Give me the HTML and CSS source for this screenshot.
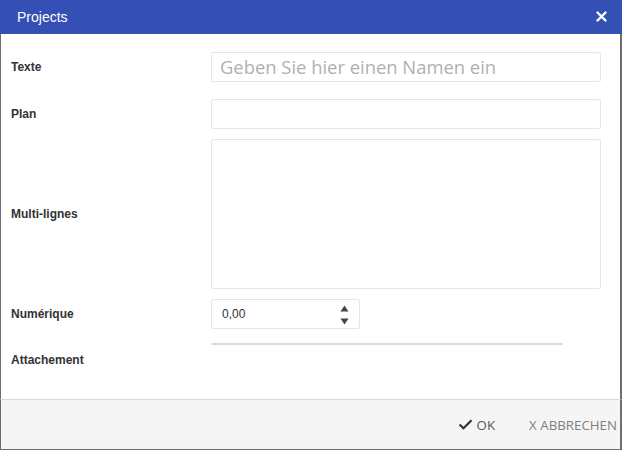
FILE: index.html
```html
<!DOCTYPE html>
<html>
<head>
<meta charset="utf-8">
<link rel="stylesheet" href="styles.css">
</head>
<body>
<div class="dialog">
  <div class="header">
    <span class="title">Projects</span>
    <span class="close">
      <svg width="11" height="11" viewBox="0 0 11 11"><path d="M1.5 1.5 L9.5 9.5 M9.5 1.5 L1.5 9.5" stroke="#fff" stroke-width="2.4" stroke-linecap="round"/></svg>
    </span>
  </div>
  <div class="content">
    <div class="row row-text">
      <label class="label">Texte</label>
      <div class="input placeholder">Geben Sie hier einen Namen ein</div>
    </div>
    <div class="row row-plan">
      <label class="label">Plan</label>
      <div class="input"></div>
    </div>
    <div class="row row-multi">
      <label class="label">Multi-lignes</label>
      <div class="input textarea"></div>
    </div>
    <div class="row row-num">
      <label class="label">Numérique</label>
      <div class="input number">
        <span class="num-value">0,00</span>
        <span class="spinner">
          <svg width="9" height="7" viewBox="0 0 9 7"><path d="M4.5 0.5 L8.5 6.5 L0.5 6.5 Z" fill="#444"/></svg>
          <svg width="9" height="7" viewBox="0 0 9 7"><path d="M0.5 0.5 L8.5 0.5 L4.5 6.5 Z" fill="#444"/></svg>
        </span>
      </div>
    </div>
    <div class="row row-attach">
      <label class="label">Attachement</label>
      <div class="attach-line"></div>
    </div>
  </div>
  <div class="footer">
    <span class="btn btn-ok">
      <svg width="15" height="11" viewBox="0 0 15 11"><path d="M1.5 5.5 L5.5 9.3 L13.5 1.3" fill="none" stroke="#333" stroke-width="2.2"/></svg>
      OK
    </span>
    <span class="btn btn-cancel">X ABBRECHEN</span>
  </div>
</div>
</body>
</html>
```

FILE: styles.css
```css
html, body {
  margin: 0;
  padding: 0;
  background: #fff;
}

.dialog {
  width: 622px;
  height: 450px;
  display: flex;
  flex-direction: column;
  font-family: "Liberation Sans", Arial, sans-serif;
  box-sizing: border-box;
}

.header {
  height: 34px;
  flex: none;
  background: #3450b5;
  color: #fff;
  display: flex;
  align-items: center;
  justify-content: space-between;
  padding: 0 15px 0 17px;
}

.title {
  font-size: 14px;
  margin-top: -1px;
}

.close {
  display: flex;
  margin-top: -2px;
}

.content {
  flex: 1;
  border-left: 1px solid #6e6e6e;
  border-right: 2px solid #6e6e6e;
  padding: 18px 0 0 10px;
  display: flex;
  flex-direction: column;
}

.row {
  display: grid;
  grid-template-columns: 200px 390px;
  align-items: center;
}

.row-text { margin-bottom: 17px; }
.row-plan { margin-bottom: 10px; }
.row-multi { margin-bottom: 10px; }
.row-num { margin-bottom: 14px; }

.label {
  font-size: 12px;
  font-weight: bold;
  color: #333;
}

.input {
  height: 30px;
  box-sizing: border-box;
  border: 1px solid #e6e6e6;
  border-radius: 2px;
  background: #fff;
}

.placeholder {
  font-family: "Open Sans", sans-serif;
  font-size: 18.4px;
  color: #b0b0b0;
  padding-left: 8px;
  line-height: 28px;
}

.textarea {
  height: 150px;
}

.number {
  width: 149px;
  display: flex;
  align-items: center;
  justify-content: space-between;
  padding: 0 10px 0 10px;
}

.num-value {
  font-size: 12px;
  color: #333;
}

.spinner {
  display: flex;
  flex-direction: column;
  gap: 6px;
  margin-top: 1px;
}

.spinner svg {
  display: block;
}

.row-attach {
  align-items: start;
  height: 34px;
}

.row-attach .label {
  align-self: center;
}

.attach-line {
  width: 352px;
  height: 2px;
  background: #dcdcdc;
  border-radius: 1px;
}

.footer {
  height: 51px;
  flex: none;
  box-sizing: border-box;
  border-top: 1px solid #dadada;
  border-left: 1px solid #6e6e6e;
  border-right: 2px solid #6e6e6e;
  border-bottom: 1px solid #6e6e6e;
  background: #f5f5f5;
  display: flex;
  align-items: center;
  justify-content: flex-end;
  padding: 0 3px 0 0;
  font-family: "Open Sans", sans-serif;
  font-size: 13.3px;
}

.btn {
  display: flex;
  align-items: center;
  gap: 4px;
}

.btn-ok {
  color: #555;
  margin-right: 34px;
}

.btn-cancel {
  color: #808080;
}
```
